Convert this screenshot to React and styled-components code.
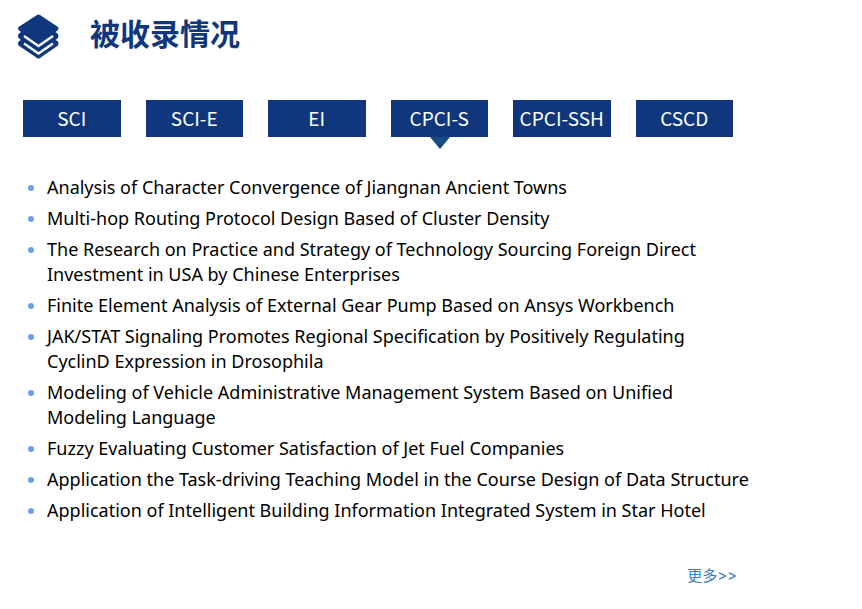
import React, { useState } from "react";
import styled, { createGlobalStyle } from "styled-components";

const NAVY = "#10377d";

const GlobalStyle = createGlobalStyle`
  *, *::before, *::after { box-sizing: border-box; }
  body {
    margin: 0;
    background: #fff;
    color: #000;
    font-family: "Noto Sans", "Noto Sans CJK SC", sans-serif;
  }
`;

const Page = styled.main`
  max-width: 754px;
  padding: 12px 0 20px;
`;

const Header = styled.header`
  display: flex;
  align-items: center;
  gap: 31px;
  height: 48px;
  padding-left: 17px;
`;

const Title = styled.h1`
  margin: 0;
  padding-bottom: 8px;
  color: ${NAVY};
  font-family: "Noto Sans CJK SC", sans-serif;
  font-size: 30px;
  font-weight: 700;
  line-height: 40px;
`;

const Tabs = styled.div`
  display: grid;
  grid-template-columns: repeat(6, minmax(0, 1fr));
  gap: 25px;
  margin: 40px 21px 0 23px;
`;

const Tab = styled.button`
  position: relative;
  height: 37px;
  padding: 0 0 2px;
  border: 0;
  background: ${NAVY};
  color: #fff;
  font-family: "Noto Sans CJK SC", sans-serif;
  font-size: 19px;
  line-height: 34px;
  white-space: nowrap;
  cursor: pointer;

  &[aria-selected="true"]::after {
    content: "";
    position: absolute;
    top: 100%;
    left: 50%;
    margin-left: -9px;
    border: solid transparent;
    border-width: 12px 10px 0;
    border-top-color: #174a80;
  }
`;

const List = styled.ul`
  display: grid;
  gap: 6px;
  margin: 38px 0 0;
  padding: 0 4px 0 28px;
  list-style: none;
`;

const Item = styled.li`
  display: flex;
  gap: 13px;
  font-size: 18px;
  line-height: 25px;

  &::before {
    content: "";
    flex: none;
    width: 6px;
    height: 6px;
    margin-top: 10px;
    border-radius: 50%;
    background: #6c9fe4;
  }
`;

const Footer = styled.footer`
  display: flex;
  justify-content: flex-end;
  margin-top: 42px;
  padding-right: 17px;
`;

const More = styled.a`
  color: #3c7cc4;
  font-family: Inter, "Noto Sans CJK SC", sans-serif;
  font-size: 15px;
  line-height: 22px;
  text-decoration: none;
`;

const TABS = ["SCI", "SCI-E", "EI", "CPCI-S", "CPCI-SSH", "CSCD"];

const PAPERS = [
  "Analysis of Character Convergence of Jiangnan Ancient Towns",
  "Multi-hop Routing Protocol Design Based of Cluster Density",
  "The Research on Practice and Strategy of Technology Sourcing Foreign Direct Investment in USA by Chinese Enterprises",
  "Finite Element Analysis of External Gear Pump Based on Ansys Workbench",
  "JAK/STAT Signaling Promotes Regional Specification by Positively Regulating CyclinD Expression in Drosophila",
  "Modeling of Vehicle Administrative Management System Based on Unified Modeling Language",
  "Fuzzy Evaluating Customer Satisfaction of Jet Fuel Companies",
  "Application the Task-driving Teaching Model in the Course Design of Data Structure",
  "Application of Intelligent Building Information Integrated System in Star Hotel",
];

function StackIcon() {
  return (
    <svg width="42" height="46" viewBox="0 0 42 46" aria-hidden="true">
      <path
        fill={NAVY}
        d="M20 2q1.500-1 3 0L41 14q1 1 0 3L38.500 19l2.500 2q1 1.500 0 4L38.500 27l2.500 1.500q1 1.500 0 4L23 45q-1.500 1-3 0L1.500 32.500q-1-2.500 0-4L4 27l-2.500-2q-1-2.500 0-4L4 19l-2.500-2q-1-2 0-3z"
      />
      <path
        fill="none"
        stroke="#fff"
        strokeWidth="2.300"
        d="M7 23l14.500 10L36 23M7 30.500l14.500 10L36 30.500"
      />
    </svg>
  );
}

export default function App() {
  const [active, setActive] = useState("CPCI-S");
  return (
    <>
      <GlobalStyle />
      <Page>
        <Header>
          <StackIcon />
          <Title>被收录情况</Title>
        </Header>
        <Tabs role="tablist">
          {TABS.map((name) => (
            <Tab
              key={name}
              type="button"
              role="tab"
              aria-selected={name === active}
              onClick={() => setActive(name)}
            >
              {name}
            </Tab>
          ))}
        </Tabs>
        <List>
          {PAPERS.map((title) => (
            <Item key={title}>{title}</Item>
          ))}
        </List>
        <Footer>
          <More href="#more">更多&gt;&gt;</More>
        </Footer>
      </Page>
    </>
  );
}
